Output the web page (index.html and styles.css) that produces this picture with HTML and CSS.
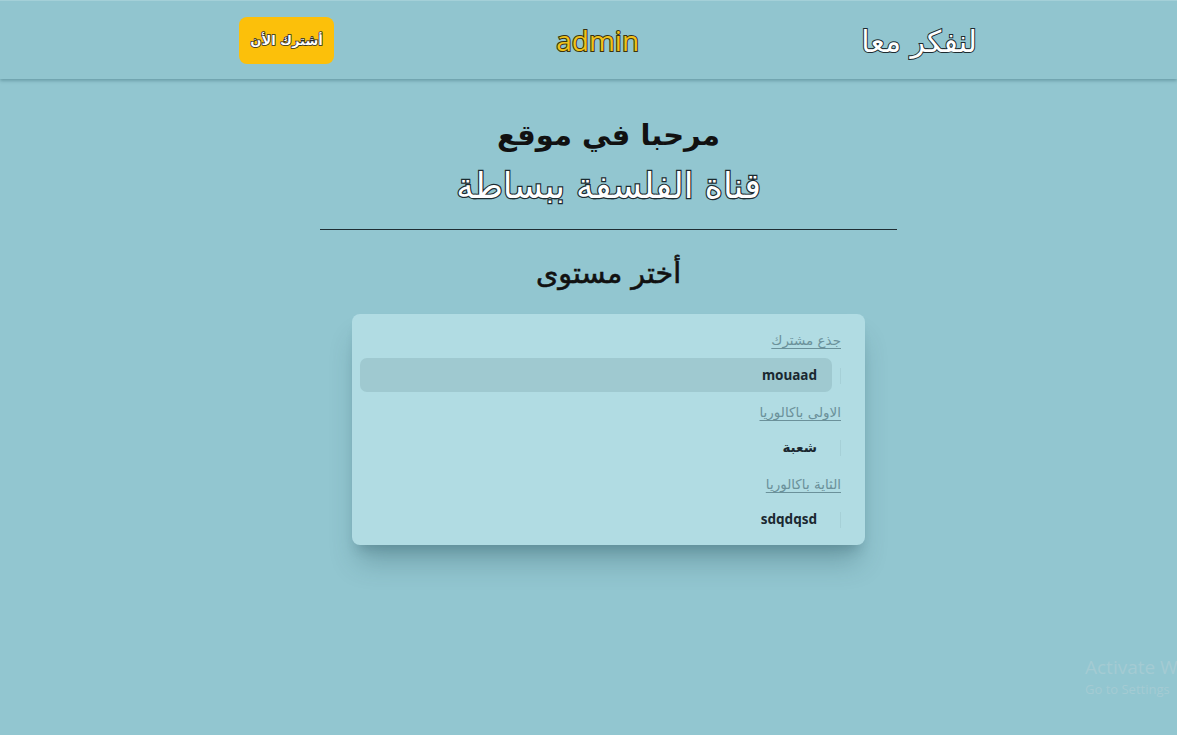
FILE: index.html
```html
<!DOCTYPE html>
<html lang="ar" dir="rtl">
<head>
<meta charset="utf-8">
<title>لنفكر معا</title>
<link rel="stylesheet" href="styles.css">
</head>
<body>
<header class="topbar">
  <div class="brand">لنفكر معا</div>
  <div class="user">admin</div>
  <a class="subscribe" href="#">أشترك الأن</a>
</header>
<main class="main">
  <h1 class="welcome">مرحبا في موقع</h1>
  <h2 class="channel">قناة الفلسفة ببساطة</h2>
  <hr class="divider">
  <h3 class="choose">أختر مستوى</h3>
  <div class="panel">
    <div class="group">
      <div class="group-head"><a class="group-title" href="#">جذع مشترك</a></div>
      <ul class="items">
        <li><a class="item active" href="#">mouaad</a></li>
      </ul>
    </div>
    <div class="group">
      <div class="group-head"><a class="group-title" href="#">الاولى باكالوريا</a></div>
      <ul class="items">
        <li><a class="item" href="#">شعبة</a></li>
      </ul>
    </div>
    <div class="group">
      <div class="group-head"><a class="group-title" href="#">الثاية باكالوريا</a></div>
      <ul class="items">
        <li><a class="item" href="#">sdqdqsd</a></li>
      </ul>
    </div>
  </div>
</main>
<div class="watermark" dir="ltr">
  <div class="wm-title">Activate W</div>
  <div class="wm-sub">Go to Settings</div>
</div>
</body>
</html>
```
FILE: styles.css
```css
html, body {
  margin: 0;
  padding: 0;
}
body {
  background: #92c6d0;
  font-family: "DejaVu Sans", "Noto Sans", sans-serif;
  width: 1177px;
  height: 735px;
  overflow: hidden;
  position: relative;
}
.topbar {
  height: 79px;
  box-sizing: border-box;
  display: flex;
  align-items: center;
  justify-content: space-between;
  padding: 0 200px 0 239px;
  background: #91c5cf;
  border-top: 1px solid #a4d0d8;
  box-shadow: 0 2px 3px rgba(40, 90, 100, 0.35);
  position: relative;
  z-index: 1;
}
.brand {
  font-size: 30px;
  color: #fff;
  -webkit-text-stroke: 2px #1d2b30;
  paint-order: stroke fill;
  font-family: "DejaVu Sans", sans-serif;
  padding-top: 2px;
}
.user {
  font-family: "Open Sans", "Noto Sans", sans-serif;
  font-size: 28px;
  color: #f0c21a;
  -webkit-text-stroke: 2px #3a3210;
  paint-order: stroke fill;
}
.subscribe {
  display: flex;
  align-items: center;
  justify-content: center;
  width: 95px;
  height: 47px;
  margin-top: 1px;
  background: #fcc00a;
  border-radius: 8px;
  color: #fff;
  font-size: 13px;
  font-weight: bold;
  text-decoration: none;
  -webkit-text-stroke: 1.6px #2a2a2a;
  paint-order: stroke fill;
  font-family: "DejaVu Sans", sans-serif;
}
.main {
  display: flex;
  flex-direction: column;
  align-items: center;
  padding: 33px 0 0 40px;
}
.welcome {
  margin: 0;
  font-size: 29px;
  font-weight: bold;
  color: #111;
  line-height: 46px;
}
.channel {
  margin: 4px 0 0;
  font-size: 35px;
  font-weight: normal;
  color: #fff;
  -webkit-text-stroke: 2.4px #1d2b30;
  paint-order: stroke fill;
  line-height: 48px;
}
.divider {
  width: 577px;
  margin: 19px 0 0;
  border: 0;
  border-top: 1px solid #1f2d33;
  height: 0;
}
.choose {
  margin: 22px 0 0;
  font-size: 28.5px;
  font-weight: normal;
  color: #111;
  line-height: 44px;
  -webkit-text-stroke: 0.6px #111;
}
.panel {
  margin-top: 18px;
  width: 513px;
  box-sizing: border-box;
  background: #b1dce3;
  border-radius: 8px;
  padding: 8px 24px 7px 8px;
  box-shadow: 0 22px 28px -6px rgba(30, 70, 80, 0.3), 0 10px 12px -6px rgba(30, 70, 80, 0.22);
}
.group {
  display: flex;
  flex-direction: column;
}
.group-head {
  height: 36px;
  display: flex;
  align-items: center;
}
.group-title {
  font-size: 13.5px;
  line-height: 20px;
  color: #6b919a;
  text-decoration: underline;
  text-underline-offset: 3px;
}
.items {
  list-style: none;
  margin: 0;
  padding: 0;
}
.items li {
  height: 36px;
  padding-right: 9px;
  display: flex;
  position: relative;
}
.items li::before {
  content: "";
  position: absolute;
  right: 0;
  top: 10px;
  height: 16px;
  border-right: 1px solid #a6d0d7;
}
.item {
  flex: 1;
  display: block;
  height: 34px;
  line-height: 34px;
  padding: 0 15px;
  border-radius: 7px;
  font-family: "Noto Sans", "DejaVu Sans", sans-serif;
  font-size: 13.5px;
  font-weight: bold;
  color: #1a2830;
  text-decoration: none;
}
.item.active {
  background: #9fc9d0;
}
.watermark {
  position: absolute;
  right: 0;
  top: 654px;
  width: 92px;
  overflow: hidden;
  white-space: nowrap;
  color: #a4cbd3;
  font-family: "Open Sans", "Noto Sans", sans-serif;
}
.wm-title {
  font-size: 19px;
  line-height: 26px;
}
.wm-sub {
  font-size: 13px;
  line-height: 18px;
}
```
